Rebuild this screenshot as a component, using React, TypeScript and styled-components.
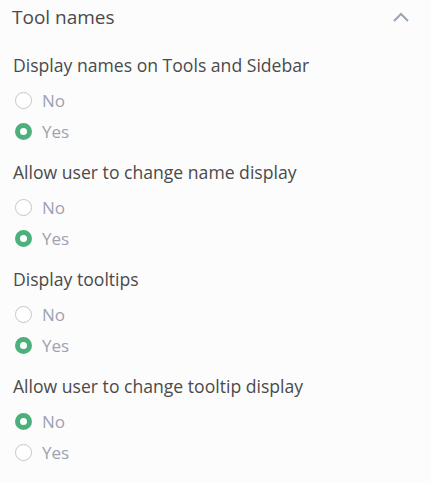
import * as React from "react";
import styled, { createGlobalStyle } from "styled-components";

const GlobalStyle = createGlobalStyle`
  body {
    margin: 0;
    background: #fcfcfc;
    font-family: "Open Sans", Lato, sans-serif;
  }
`;

const Panel = styled.section`
  width: 431px;
  height: 483px;
  background: #fcfcfc;
  box-sizing: border-box;
`;

const Header = styled.header`
  height: 34px;
  display: flex;
  align-items: center;
  justify-content: space-between;
  padding: 0 22px 0 12px;
`;

const Title = styled.h2`
  margin: 0;
  font-size: 19px;
  font-weight: 400;
  color: #4a4a4a;
`;

const Chevron = styled.button`
  border: 0;
  background: none;
  padding: 0;
  display: flex;
  color: #9aa5b5;
`;

const Body = styled.div`
  padding: 17px 12px 0 13px;
  display: flex;
  flex-direction: column;
  gap: 11px;
`;

const Group = styled.fieldset`
  border: 0;
  margin: 0;
  padding: 0;
  display: flex;
  flex-direction: column;
`;

const Question = styled.legend`
  padding: 0;
  height: 28px;
  line-height: 28px;
  font-size: 17.6px;
  color: #4a4a4a;
  margin-bottom: 6px;
`;

const Option = styled.label`
  height: 31px;
  display: flex;
  align-items: center;
  gap: 10px;
  padding-left: 2px;
  font-size: 17px;
  color: #9ca2b2;
`;

const Dot = styled.span<{ $on: boolean }>`
  width: 17px;
  height: 17px;
  box-sizing: border-box;
  border-radius: 50%;
  background: #fff;
  border: ${(p) => (p.$on ? "5.5px solid #4cb07d" : "1px solid #c6c6c6")};
`;

const groups = [
  { q: "Display names on Tools and Sidebar", v: "Yes" },
  { q: "Allow user to change name display", v: "Yes" },
  { q: "Display tooltips", v: "Yes" },
  { q: "Allow user to change tooltip display", v: "No" },
];

export default function App() {
  return (
    <Panel>
      <GlobalStyle />
      <Header>
        <Title>Tool names</Title>
        <Chevron aria-label="Collapse">
          <svg width="16" height="10" viewBox="0 0 16 10" fill="none">
            <path d="M1 9 L8 2 L15 9" stroke="currentColor" strokeWidth="2" />
          </svg>
        </Chevron>
      </Header>
      <Body>
        {groups.map((g) => (
          <Group key={g.q}>
            <Question>{g.q}</Question>
            {["No", "Yes"].map((o) => (
              <Option key={o}>
                <Dot $on={g.v === o} />
                {o}
              </Option>
            ))}
          </Group>
        ))}
      </Body>
    </Panel>
  );
}
